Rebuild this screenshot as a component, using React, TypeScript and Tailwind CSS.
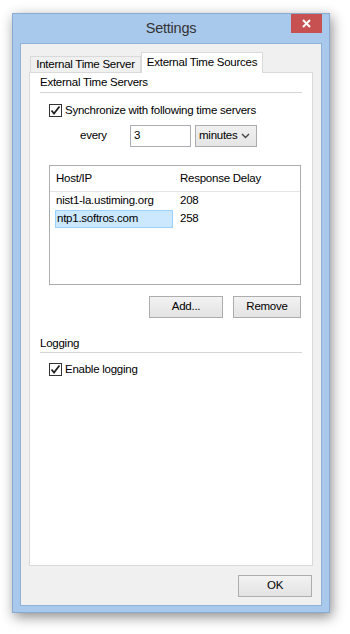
import React from 'react';

const font = { fontFamily: '"Liberation Sans", Arial, sans-serif', letterSpacing: '-0.25px' };

function CheckBox({ label }: { label: string }) {
  return (
    <div className="flex items-center gap-[3px] h-[13px]">
      <div className="w-[13px] h-[13px] border border-[#333] bg-white flex items-center justify-center">
        <svg width="11" height="11" viewBox="0 0 11 11">
          <path d="M1.5 5.5 L4 8.5 L9.5 1.5" stroke="#222" strokeWidth="1.8" fill="none" />
        </svg>
      </div>
      <span className="text-[11.5px] leading-[13px] text-black whitespace-nowrap">{label}</span>
    </div>
  );
}

function Button({ label, w }: { label: string; w: string }) {
  return (
    <div
      className={`${w} h-[22px] border border-[#adadad] bg-gradient-to-b from-[#f2f2f2] to-[#e3e3e3] flex items-center justify-center text-[11.5px] leading-none text-black`}
    >
      {label}
    </div>
  );
}

export default function App() {
  return (
    <div className="w-[350px] h-[634px] bg-white overflow-hidden" style={font}>
      <div className="ml-[12px] mt-[13px] w-[318px] h-[600px] bg-[#a9c9ec] border border-[#8aaad0] shadow-[2px_4px_12px_rgba(0,0,0,0.45)] flex flex-col">
        {/* Title bar */}
        <div className="h-[29px] flex items-start relative">
          <div className="flex-1 text-center text-[14.5px] text-[#333] pt-[5px] leading-[18px]">Settings</div>
          <div className="absolute right-[7px] top-0 w-[31px] h-[19px] bg-[#c75050] flex items-center justify-center">
            <svg width="9" height="9" viewBox="0 0 9 9">
              <path d="M1 1 L8 8 M8 1 L1 8" stroke="white" strokeWidth="2" />
            </svg>
          </div>
        </div>

        {/* Client area */}
        <div className="mx-[7px] mb-[6px] flex-1 bg-[#f0f0f0] border border-[#8fb1d6] flex flex-col px-[8px] pt-[8px] pb-[8px]">
          {/* Tabs */}
          <div className="flex items-end h-[20px] pl-[1px]">
            <div className="w-[111px] h-[16px] border border-b-0 border-[#d9d9d9] bg-[#f0f0f0] text-[11.5px] leading-none text-black flex items-center justify-center whitespace-nowrap">
              Internal Time Server
            </div>
            <div className="w-[122px] h-[21px] border border-b-0 border-[#d9d9d9] bg-white text-[11.5px] leading-none text-black flex items-start justify-center pt-[4px] relative z-10 -mb-[1px] whitespace-nowrap">
              External Time Sources
            </div>
          </div>

          {/* Tab panel */}
          <div className="flex-1 bg-white border border-[#d9d9d9] px-[10px] flex flex-col">
            <div className="text-[11.5px] text-black h-[19px] leading-[19px]">External Time Servers</div>
            <div className="h-px bg-[#d5d5d5]" />

            <div className="pl-[9px] mt-[11px]">
              <CheckBox label="Synchronize with following time servers" />
            </div>

            <div className="flex items-center mt-[8px]">
              <span className="text-[11.5px] text-black ml-[40px] w-[50px]">every</span>
              <div className="w-[61px] h-[22px] border border-[#abadb3] bg-white text-[11.5px] text-black pl-[3px] flex items-center">
                3
              </div>
              <div className="ml-[4px] w-[62px] h-[22px] border border-[#acacac] bg-gradient-to-b from-[#f0f0f0] to-[#e5e5e5] text-[11.5px] text-black pl-[3px] pr-[6px] flex items-center justify-between">
                <span>minutes</span>
                <svg width="9" height="6" viewBox="0 0 9 6">
                  <path d="M1 1 L4.5 4.5 L8 1" stroke="#444" strokeWidth="1.4" fill="none" />
                </svg>
              </div>
            </div>

            {/* List */}
            <div className="ml-[9px] mr-[1px] mt-[18px] h-[120px] border border-[#acacac] bg-white flex flex-col">
              <div className="h-[26px] flex items-center border-b border-[#e5e5e5] text-[11.5px] text-black">
                <span className="pl-[6px] w-[130px]">Host/IP</span>
                <span>Response Delay</span>
              </div>
              <div className="flex items-center h-[18px] text-[11.5px] text-black">
                <span className="pl-[6px] w-[130px]">nist1-la.ustiming.org</span>
                <span>208</span>
              </div>
              <div className="flex items-center h-[18px] text-[11.5px] text-black">
                <div className="ml-[5px] w-[118px] h-[18px] bg-[#cce8ff] border border-[#99d1ff] pl-[1px] flex items-center">
                  ntp1.softros.com
                </div>
                <span className="ml-[7px]">258</span>
              </div>
            </div>

            <div className="flex justify-end gap-[10px] mt-[11px] mr-[1px]">
              <Button label="Add..." w="w-[74px]" />
              <Button label="Remove" w="w-[68px]" />
            </div>

            <div className="text-[11.5px] text-black mt-[16px] h-[18px] leading-[18px]">Logging</div>
            <div className="h-px bg-[#d5d5d5]" />
            <div className="pl-[9px] mt-[10px]">
              <CheckBox label="Enable logging" />
            </div>
          </div>

          <div className="flex justify-end mt-[9px] pr-[1px]">
            <Button label="OK" w="w-[74px]" />
          </div>
        </div>
      </div>
    </div>
  );
}
